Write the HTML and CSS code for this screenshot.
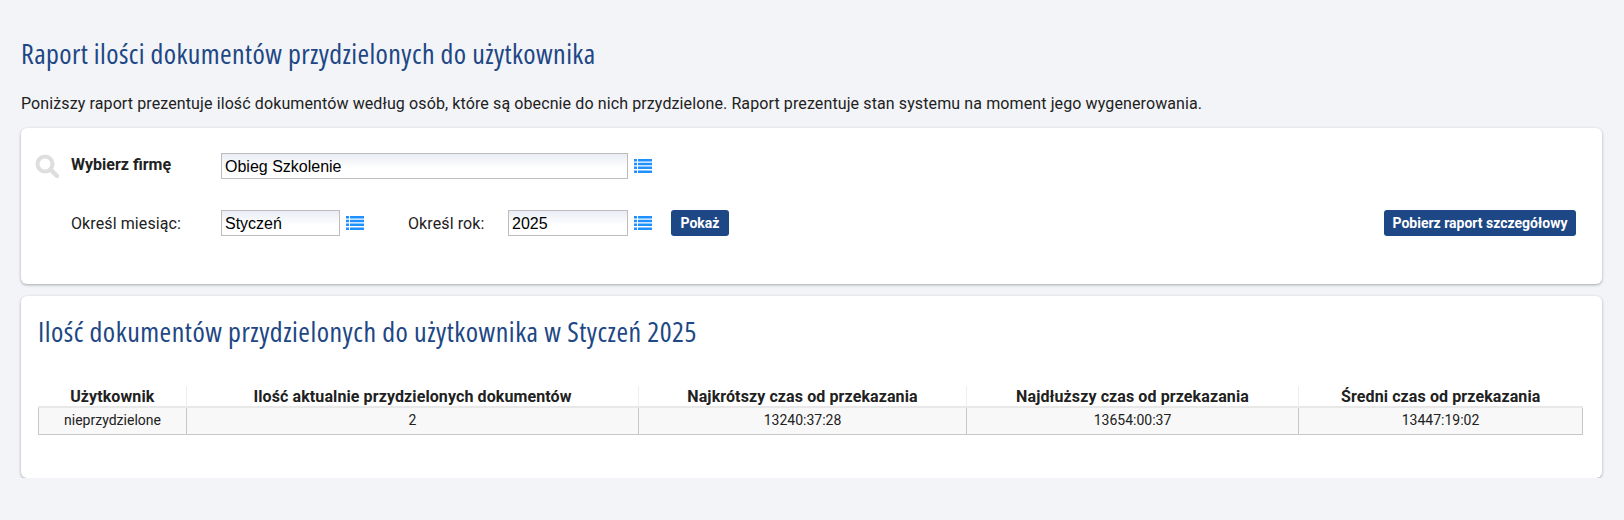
FILE: index.html
```html
<!DOCTYPE html>
<html lang="pl">
<head>
    <meta charset="UTF-8">
    <title>Raport ilości dokumentów</title>
    <link rel="stylesheet" href="styles.css">
</head>
<body>
    <main class="page">
        <h1 class="page-title">Raport ilości dokumentów przydzielonych do użytkownika</h1>
        <p class="page-intro">Poniższy raport prezentuje ilość dokumentów według osób, które są obecnie do nich przydzielone. Raport prezentuje stan systemu na moment jego wygenerowania.</p>

        <section class="card card-filters">
            <div class="filter-row">
                <svg class="search-icon" width="24" height="24" viewBox="0 0 24 24">
                    <circle cx="10" cy="10" r="7.5" fill="none" stroke="#dedede" stroke-width="4"/>
                    <path d="M15.5 15.5L22 22" stroke="#dedede" stroke-width="4.5" stroke-linecap="round"/>
                </svg>
                <label class="filter-label label-main">Wybierz firmę</label>
                <input class="select-input input-wide" type="text" value="Obieg Szkolenie" readonly>
                <svg class="list-icon" width="18" height="14" viewBox="0 0 18 14">
                    <path d="M0 0h3v2.5H0zM4 0h14v2.5H4zM0 3.8h3v2.5H0zM4 3.8h14v2.5H4zM0 7.6h3v2.5H0zM4 7.6h14v2.5H4zM0 11.4h3v2.5H0zM4 11.4h14v2.5H4z" fill="#1e90ff"/>
                </svg>
            </div>
            <div class="filter-row filter-row-second">
                <label class="filter-label label-month">Określ miesiąc:</label>
                <input class="select-input input-month" type="text" value="Styczeń" readonly>
                <svg class="list-icon" width="18" height="14" viewBox="0 0 18 14">
                    <path d="M0 0h3v2.5H0zM4 0h14v2.5H4zM0 3.8h3v2.5H0zM4 3.8h14v2.5H4zM0 7.6h3v2.5H0zM4 7.6h14v2.5H4zM0 11.4h3v2.5H0zM4 11.4h14v2.5H4z" fill="#1e90ff"/>
                </svg>
                <label class="filter-label label-year">Określ rok:</label>
                <input class="select-input input-year" type="text" value="2025" readonly>
                <svg class="list-icon" width="18" height="14" viewBox="0 0 18 14">
                    <path d="M0 0h3v2.5H0zM4 0h14v2.5H4zM0 3.8h3v2.5H0zM4 3.8h14v2.5H4zM0 7.6h3v2.5H0zM4 7.6h14v2.5H4zM0 11.4h3v2.5H0zM4 11.4h14v2.5H4z" fill="#1e90ff"/>
                </svg>
                <button class="btn btn-show" type="button">Pokaż</button>
                <button class="btn btn-download" type="button">Pobierz raport szczegółowy</button>
            </div>
        </section>

        <section class="card card-report">
            <h2 class="report-title">Ilość dokumentów przydzielonych do użytkownika w Styczeń 2025</h2>
            <table class="report-table">
                <thead>
                    <tr>
                        <th class="col-user">Użytkownik</th>
                        <th class="col-count">Ilość aktualnie przydzielonych dokumentów</th>
                        <th class="col-min">Najkrótszy czas od przekazania</th>
                        <th class="col-max">Najdłuższy czas od przekazania</th>
                        <th>Średni czas od przekazania</th>
                    </tr>
                </thead>
                <tbody>
                    <tr>
                        <td>nieprzydzielone</td>
                        <td>2</td>
                        <td>13240:37:28</td>
                        <td>13654:00:37</td>
                        <td>13447:19:02</td>
                    </tr>
                </tbody>
            </table>
        </section>
    </main>
</body>
</html>
```
FILE: styles.css
```css
* {
    margin: 0;
    padding: 0;
    box-sizing: border-box;
}

body {
    font-family: Roboto, sans-serif;
    background: #f2f4f8;
    color: #212121;
    font-size: 16px;
}

.page {
    padding: 38px 22px 0 21px;
}

.page-title,
.report-title {
    font-family: "Open Sans", sans-serif;
    font-stretch: 75%;
    font-weight: 500;
    color: #1e4785;
    font-size: 28px;
    letter-spacing: 0.4px;
    line-height: 30px;
}

.report-title {
    letter-spacing: 0.5px;
}

.page-intro {
    margin-top: 26px;
    line-height: 20px;
    letter-spacing: 0.11px;
    margin-bottom: 14px;
}

.card {
    background: #fff;
    border-radius: 6px;
    box-shadow: 0 1px 3px rgba(0, 0, 0, 0.32);
}

.card-filters {
    height: 156px;
    padding: 25px 26px 0 14px;
    margin-bottom: 12px;
}

.filter-row {
    display: flex;
    align-items: center;
    height: 26px;
}

.filter-row-second {
    margin-top: 31px;
}

.filter-label {
    display: block;
}

.search-icon {
    flex: none;
    margin-right: 12px;
}

.label-main {
    font-weight: bold;
    width: 150px;
    margin-top: -4px;
}

.label-month {
    margin-left: 36px;
    width: 150px;
    letter-spacing: 0.1px;
}

.label-year {
    margin-left: 44px;
    width: 100px;
    letter-spacing: 0.1px;
}

.select-input {
    height: 26px;
    border: 1px solid #bdbdbd;
    background: linear-gradient(#e9edf4, #fff 60%);
    font-family: "Liberation Sans", sans-serif;
    font-size: 16px;
    color: #000;
    padding: 2px 3px 0;
}

.input-wide {
    width: 407px;
}

.input-month {
    width: 119px;
}

.input-year {
    width: 120px;
}

.list-icon {
    flex: none;
    margin-left: 6px;
}

.btn {
    height: 26px;
    border: none;
    border-radius: 3px;
    background: #1e4785;
    color: #fff;
    font-family: Roboto, sans-serif;
    font-size: 14px;
    font-weight: bold;
}

.btn-show {
    width: 58px;
    margin-left: 19px;
}

.btn-download {
    width: 192px;
    margin-left: auto;
}

.card-report {
    height: 182px;
    padding: 20px 19px 0 17px;
}

.report-title {
    margin-bottom: 40px;
}

.report-table {
    width: 100%;
    border-collapse: collapse;
    table-layout: fixed;
}

.report-table th {
    height: 21px;
    font-size: 16px;
    font-weight: bold;
    letter-spacing: 0.1px;
    border-left: 1px solid #eee;
    border-bottom: 2px solid #e8e8e8;
}

.report-table th:first-child {
    border-left: none;
}

.report-table td {
    height: 27px;
    padding-bottom: 2px;
    font-size: 14px;
    text-align: center;
    background: #f8f8f8;
    border-left: 1px solid #c8c8c8;
    border-right: 1px solid #c8c8c8;
    border-bottom: 1px solid #c8c8c8;
}

.col-user {
    width: 148px;
}

.col-count {
    width: 452px;
}

.col-min {
    width: 328px;
}

.col-max {
    width: 332px;
}
```
